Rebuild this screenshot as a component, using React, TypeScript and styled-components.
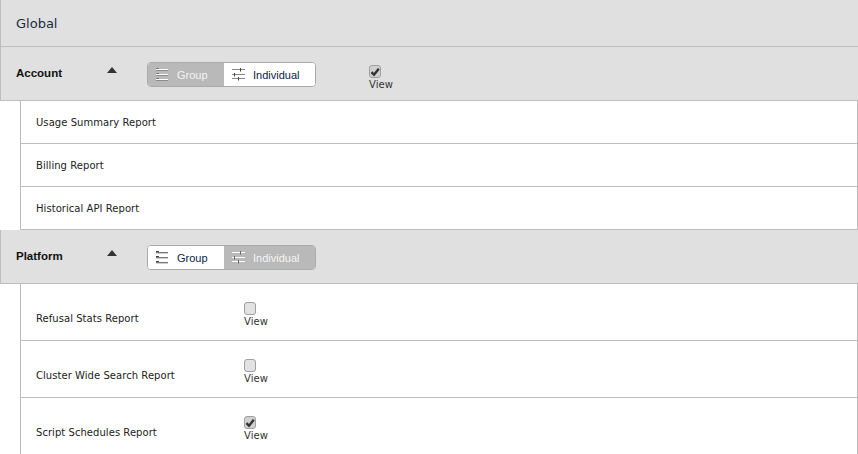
import styled, { createGlobalStyle } from "styled-components";

const Global = createGlobalStyle`
	html, body {
		margin: 0;
		padding: 0;
		background: #fff;
		overflow: hidden;
	}
`;

const Page = styled.div`
	width: 858px;
	height: 454px;
	overflow: hidden;
	font-family: "Liberation Sans", Arial, sans-serif;
`;
const Title = styled.div`
	height: 46px;
	line-height: 47px;
	padding-left: 15px;
	background: #e0e0e0;
	border-left: 1px solid #bdbdbd;
	border-bottom: 1px solid #bdbdbd;
	font-family: "DejaVu Sans", sans-serif;
	font-size: 13px;
	color: #1c2c3c;
`;
const Section = styled.div`
	display: flex;
	align-items: flex-start;
	height: 53px;
	background: #e0e0e0;
	border-left: 1px solid #bdbdbd;
	border-bottom: 1px solid #bdbdbd;
`;
const SectionName = styled.div`
	width: 91px;
	padding: 19px 0 0 15px;
	font-size: 11.5px;
	font-weight: bold;
	line-height: 14px;
	color: #111;
`;
const Caret = styled.div`
	width: 0;
	height: 0;
	margin: 20px 30px 0 0;
	border-left: 5.5px solid transparent;
	border-right: 5.5px solid transparent;
	border-bottom: 6px solid #333;
`;
const Toggle = styled.div`
	display: flex;
	box-sizing: border-box;
	width: 169px;
	height: 25px;
	margin-top: 15px;
	border: 1px solid #aaa;
	border-radius: 4px;
	overflow: hidden;
	background: #fff;
`;
const ToggleItem = styled.div<{ $active: boolean; $wide?: boolean }>`
	display: flex;
	align-items: center;
	gap: ${(p) => (p.$wide ? 8 : 9)}px;
	flex: ${(p) => (p.$wide ? "1 1 0" : "0 0 76px")};
	padding-left: 8px;
	box-sizing: border-box;
	font-size: 11px;
	background: ${(p) => (p.$active ? "#b9b9b9" : "#fff")};
	color: ${(p) => (p.$active ? "#f4f4f4" : "#0b2447")};
`;
const Perm = styled.label<{ $section?: boolean }>`
	display: flex;
	flex-direction: column;
	align-items: flex-start;
	gap: 1px;
	font-family: "DejaVu Sans", sans-serif;
	font-size: 10px;
	line-height: 12px;
	letter-spacing: 0.1px;
	color: #333;
	margin: ${(p) => (p.$section ? "18px 0 0 53px" : "0")};
`;
const Check = styled.span<{ $on: boolean }>`
	display: flex;
	align-items: center;
	justify-content: center;
	box-sizing: border-box;
	width: 12px;
	height: 13px;
	border: 1px solid #a0a0a0;
	border-radius: 3px;
	background: ${(p) => (p.$on ? "#d0d0d0" : "#e2e2e2")};
`;
const Rows = styled.div`
	margin-left: 20px;
	border-left: 1px solid #bdbdbd;
	border-right: 1px solid #bdbdbd;
`;
const Row = styled.div<{ $tall?: boolean }>`
	display: flex;
	align-items: ${(p) => (p.$tall ? "flex-start" : "center")};
	height: ${(p) => (p.$tall ? 56 : 42)}px;
	border-bottom: 1px solid #bdbdbd;
	padding-left: 15px;
`;
const RowName = styled.div<{ $tall?: boolean }>`
	width: 208px;
	font-family: "DejaVu Sans", sans-serif;
	font-size: 10px;
	line-height: 12px;
	letter-spacing: 0.05px;
	color: #222;
	margin-top: ${(p) => (p.$tall ? "29px" : "2px")};
`;
const RowPerm = styled.div`
	margin-top: 18px;
`;

function GroupIcon({ on }: { on: boolean }) {
	const line = on ? "#fff" : "#777";
	const shade = on ? "#8c8c8c" : "#d0d0d0";
	const node = on ? "#777" : "#444";
	return (
		<svg width="12" height="13" viewBox="0 0 12 13" fill="none">
			<path d="M0 1.5h12M0 6.5h12M0 11.5h12" stroke={line} />
			<path d="M0 2.5h12M0 7.5h12M0 12.5h12" stroke={shade} />
			<path d="M0 .5h3M0 5.5h3M0 10.5h3" stroke={node} />
		</svg>
	);
}

function SlidersIcon({ on }: { on: boolean }) {
	const line = on ? "#fff" : "#888";
	const knob = on ? "#666" : "#444";
	return (
		<svg width="13" height="13" viewBox="0 0 13 13" fill="none">
			<path d="M0 1.5h13M0 6.5h13M0 10.5h13" stroke={line} />
			<path d="M8.5 0v3.5M2.5 5v3.5M6.5 9v3.5" stroke={knob} />
		</svg>
	);
}

function ViewCheck({ on, section }: { on: boolean; section?: boolean }) {
	return (
		<Perm $section={section}>
			<Check $on={on}>
				{on && (
					<svg width="10" height="10" viewBox="0 0 10 10">
						<path d="M1.5 5.2 4 7.8 8.8 1.8" fill="none" stroke="#333" strokeWidth="2.4" />
					</svg>
				)}
			</Check>
			View
		</Perm>
	);
}

function Switcher({ active }: { active: "group" | "individual" }) {
	const group = active === "group";
	return (
		<Toggle>
			<ToggleItem $active={group}>
				<GroupIcon on={group} />
				Group
			</ToggleItem>
			<ToggleItem $active={!group} $wide>
				<SlidersIcon on={!group} />
				Individual
			</ToggleItem>
		</Toggle>
	);
}

function App() {
	return (
		<>
			<Global />
			<Page>
				<Title>Global</Title>
				<Section>
					<SectionName>Account</SectionName>
					<Caret />
					<Switcher active="group" />
					<ViewCheck on section />
				</Section>
				<Rows>
					<Row>
						<RowName>Usage Summary Report</RowName>
					</Row>
					<Row>
						<RowName>Billing Report</RowName>
					</Row>
					<Row>
						<RowName>Historical API Report</RowName>
					</Row>
				</Rows>
				<Section>
					<SectionName>Platform</SectionName>
					<Caret />
					<Switcher active="individual" />
				</Section>
				<Rows>
					<Row $tall>
						<RowName $tall>Refusal Stats Report</RowName>
						<RowPerm>
							<ViewCheck on={false} />
						</RowPerm>
					</Row>
					<Row $tall>
						<RowName $tall>Cluster Wide Search Report</RowName>
						<RowPerm>
							<ViewCheck on={false} />
						</RowPerm>
					</Row>
					<Row $tall>
						<RowName $tall>Script Schedules Report</RowName>
						<RowPerm>
							<ViewCheck on />
						</RowPerm>
					</Row>
				</Rows>
			</Page>
		</>
	);
}

export default App;
